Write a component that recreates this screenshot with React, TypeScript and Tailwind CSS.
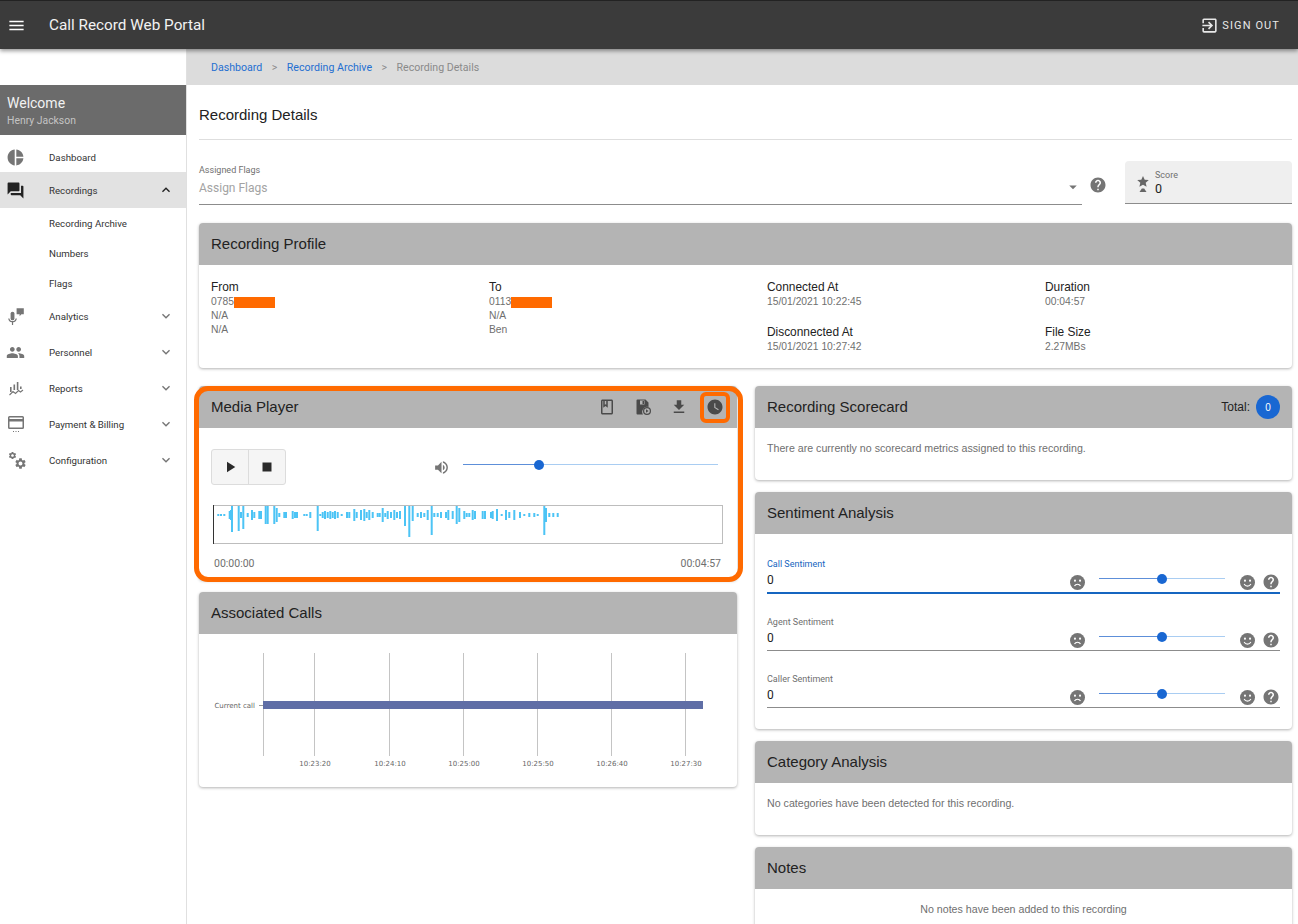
import type { ReactNode } from "react";
import {
  MdMenu,
  MdPieChart,
  MdForum,
  MdExpandLess,
  MdExpandMore,
  MdPeople,
  MdSettings,
  MdExitToApp,
  MdHelp,
  MdArrowDropDown,
  MdOutlineBook,
  MdFileDownload,
  MdWatchLater,
  MdPlayArrow,
  MdStop,
  MdVolumeUp,
} from "react-icons/md";

// x, up, down (pixels from the waveform box)
const wave: [number, number, number][] = [
  [4.3, 1, 1], [7, 1, 1], [10.3, 1, 1], [15.7, 4, 4], [17, 5, 5], [18, 9, 17], [24.7, 9, 16], [27, 3, 3], [29.3, 9, 14],
  [33.7, 2, 2], [38, 5, 5], [40.3, 3, 3], [45.3, 4, 4], [47, 4, 4], [51.7, 9, 9], [53.7, 9, 9], [60.3, 9, 9], [62.7, 7, 7],
  [65.3, 2, 2], [70.3, 3, 3], [72, 3, 3], [78.7, 4, 4], [81, 3, 3], [83, 3, 3], [90.3, 1, 1], [92.7, 1, 1], [96.3, 3, 3],
  [103.7, 9, 16], [106.3, 1, 1], [108.7, 3, 3], [111, 4, 4], [113.7, 3, 3], [116.3, 4, 4], [118.7, 3, 3], [121, 4, 4], [123.7, 3, 3],
  [127.7, 1, 1], [133, 3, 3], [135.3, 3, 3], [140.3, 6, 6], [142.7, 3, 3], [147, 5, 5], [150.3, 6, 6], [152.7, 3, 3], [155.3, 5, 5],
  [158.7, 3, 3], [163.7, 2, 2], [165.7, 2, 2], [168.7, 7, 7], [171.3, 2, 2], [173.7, 4, 4], [177, 3, 3], [180.3, 5, 5], [183, 3, 3], [186, 4, 4],
  [191, 9, 11], [195.3, 9, 22], [198.7, 9, 6], [203.7, 2, 2], [207, 3, 3], [210.3, 2, 2], [213.7, 5, 5],
  [217.7, 9, 20], [220.3, 2, 2], [223.7, 2, 2], [227, 3, 3], [232, 3, 3], [234.3, 5, 5], [238.7, 4, 4], [242.7, 9, 9], [245.3, 7, 7],
  [250.3, 4, 4], [252.7, 2, 2], [255.3, 2, 2], [258.7, 5, 5], [261, 4, 4], [268.7, 4, 4], [271, 4, 4], [277, 3, 3], [278.7, 4, 4], [283, 6, 6],
  [287.7, 1, 1], [292, 5, 5], [295.3, 3, 3], [300.3, 5, 5], [306, 3, 3], [310.3, 1, 1], [315.3, 2, 2], [320.3, 2, 2], [323.7, 1, 1],
  [330.3, 9, 20], [332, 7, 7], [335.3, 2, 2], [339.3, 2, 2], [343.7, 2, 2],
];

const chartTicks = [
  { x: 314, label: "10:23:20" },
  { x: 389, label: "10:24:10" },
  { x: 463, label: "10:25:00" },
  { x: 537, label: "10:25:50" },
  { x: 611, label: "10:26:40" },
  { x: 685, label: "10:27:30" },
];

function Face({ happy }: { happy?: boolean }) {
  return (
    <svg viewBox="0 0 16 16" className="size-[15px] shrink-0">
      <circle cx="8" cy="8" r="8" fill="#757575" />
      <circle cx="5.3" cy="6" r="1.1" fill="#fff" />
      <circle cx="10.7" cy="6" r="1.1" fill="#fff" />
      <path
        d={happy ? "M4.4 9.6c.8 1.6 2 2.3 3.6 2.3s2.8-.7 3.6-2.3" : "M4.8 11.8c.7-1.4 1.8-2 3.2-2s2.5.6 3.2 2"}
        fill="none"
        stroke="#fff"
        strokeWidth="1.2"
      />
    </svg>
  );
}

function Slider({ track, left, thumb }: { track: string; left: string; thumb: string }) {
  return (
    <div className={`relative h-[9px] ${track}`}>
      <div className="absolute top-[4px] h-[1.5px] w-full bg-[#a9cdf2]" />
      <div className={`absolute top-[4px] left-0 h-[1.5px] bg-[#5d8fd9] ${left}`} />
      <div className={`absolute top-0 size-[10px] -translate-x-1/2 rounded-full bg-[#1967d2] ${thumb}`} />
    </div>
  );
}

function NavRow({
  icon,
  label,
  open,
  active,
}: {
  icon: ReactNode;
  label: string;
  open?: boolean;
  active?: boolean;
}) {
  return (
    <div className={`flex h-[36px] items-center pr-[12px] ${active ? "bg-[#e2e2e2]" : ""}`}>
      <div className="flex w-[49px] justify-start pl-[6px] text-[#757575]">{icon}</div>
      <span className="flex-1 pt-[2px] text-[9.7px] text-[#333]">{label}</span>
      {open ? (
        <MdExpandLess className="size-[16px] text-[#222]" />
      ) : (
        <MdExpandMore className="size-[16px] text-[#757575]" />
      )}
    </div>
  );
}

function Card({
  title,
  right,
  children,
  className,
}: {
  title: string;
  right?: ReactNode;
  children: ReactNode;
  className?: string;
}) {
  return (
    <section className={`rounded-[4px] bg-white shadow-[0_1px_3px_rgba(0,0,0,0.3)] ${className ?? ""}`}>
      <header className="flex h-[42px] items-center justify-between rounded-t-[4px] bg-[#b4b4b4] px-[12px]">
        <h2 className="font-['Liberation_Sans',sans-serif] text-[15px] text-[#222]">{title}</h2>
        {right}
      </header>
      {children}
    </section>
  );
}

function Info({ label, lines }: { label: string; lines: ReactNode[] }) {
  return (
    <div>
      <div className="text-[11.9px] leading-[15px] text-[#222]">{label}</div>
      {lines.map((line, i) => (
        <div key={i} className="text-[10.3px] leading-[14px] text-[#6f6f6f]">
          {line}
        </div>
      ))}
    </div>
  );
}

function SentimentRow({ label, focused }: { label: string; focused?: boolean }) {
  return (
    <div
      className={`flex h-[43px] items-end justify-between ${
        focused ? "border-b-2 border-[#1565c0]" : "border-b border-[#8c8c8c]"
      }`}
    >
      <div className="pb-[5px] font-['Roboto',sans-serif]">
        <div className={`text-[9px] leading-[11px] ${focused ? "text-[#1565c0]" : "text-[#6f6f6f]"}`}>{label}</div>
        <div className="mt-[3px] text-[12px] leading-[14px] text-[#222]">0</div>
      </div>
      <div className="flex items-center pb-[1px]">
        <Face />
        <div className="mr-[15px] ml-[14px] -translate-y-[4px]">
          <Slider track="w-[126px]" left="w-[63px]" thumb="left-1/2" />
        </div>
        <Face happy />
        <MdHelp className="ml-[7px] size-[18px] text-[#757575]" />
      </div>
    </div>
  );
}

export default function App() {
  return (
    <div className="flex h-[924px] w-[1298px] flex-col overflow-hidden bg-white font-['Roboto',sans-serif]">
      <header className="relative z-10 flex h-[49px] shrink-0 items-center justify-between border-t border-[#222] bg-[#3b3b3b] pr-[18px] pl-[7px] shadow-[0_2px_4px_rgba(0,0,0,0.4)]">
        <div className="flex items-center">
          <MdMenu className="size-[19px] text-white" />
          <span className="ml-[23px] text-[15.3px] text-[#f2f2f2]">Call Record Web Portal</span>
        </div>
        <div className="flex items-center text-[#e8e8e8]">
          <MdExitToApp className="size-[19px]" />
          <span className="ml-[3px] pt-[2px] text-[11px] tracking-[1.1px]">SIGN OUT</span>
        </div>
      </header>

      <div className="flex flex-1 overflow-hidden">
        <aside className="w-[187px] shrink-0 border-r border-[#e0e0e0] bg-white">
          <div className="mt-[36px] flex h-[50px] flex-col justify-center bg-[#6b6b6b] px-[7px] pt-[2px]">
            <div className="text-[14px] leading-[17px] text-[#f2f2f2]">Welcome</div>
            <div className="mt-[2px] text-[10.4px] leading-[13px] text-[#c4c4c4]">Henry Jackson</div>
          </div>
          <div className="mt-[7px] flex h-[30px] items-center">
            <div className="w-[49px] pl-[6px] text-[#757575]">
              <MdPieChart className="size-[19px]" />
            </div>
            <span className="pt-[2px] text-[9.7px] text-[#333]">Dashboard</span>
          </div>
          <NavRow icon={<MdForum className="size-[19px] text-[#222]" />} label="Recordings" open active />
          {["Recording Archive", "Numbers", "Flags"].map((item) => (
            <div key={item} className="flex h-[30px] items-center pt-[2px] pl-[49px] text-[9.7px] text-[#333]">
              {item}
            </div>
          ))}
          <NavRow
            label="Analytics"
            icon={
              <svg viewBox="2 1 15 15" className="ml-[1px] size-[18px]" fill="currentColor">
                <path d="M5 6.500a1.600 1.600 0 0 1 3.200 0v4a1.600 1.600 0 0 1-3.200 0z" />
                <path d="M3 10.500h1c.2 1.400 1.200 2.200 2.600 2.200s2.400-.8 2.600-2.200h1c-.2 1.800-1.400 3-3.100 3.200V16H6.100v-2.300C4.400 13.500 3.200 12.300 3 10.500z" />
                <path d="M10 2h6v5h-2l-1.500 1.700V7H10z" />
              </svg>
            }
          />
          <NavRow label="Personnel" icon={<MdPeople className="size-[19px]" />} />
          <NavRow
            label="Reports"
            icon={
              <svg viewBox="0 0 18 18" className="ml-[1px] size-[18px]" fill="currentColor">
                <path d="M3 8h1.600v5H3zM6.500 5.500h1.600V11H6.500zM9.800 3h1.600v8H9.800zM13 7.500h1.600V10H13z" />
                <path d="M2.500 16l3.500-3.500 2.500 2 3-3 2 1.500 2.500-2" fill="none" stroke="currentColor" strokeWidth="1.100" />
              </svg>
            }
          />
          <NavRow
            label="Payment & Billing"
            icon={
              <svg viewBox="0 0 18 18" className="ml-[1px] size-[18px]" fill="currentColor">
                <path d="M2.500 1h13A1.500 1.500 0 0 1 17 2.500v10a1.500 1.500 0 0 1-1.500 1.500h-13A1.500 1.500 0 0 1 1 12.500v-10A1.500 1.500 0 0 1 2.500 1zm0 1.500V4h13V2.500zm0 4v6h13v-6z" />
                <path d="M6 16h1v1H6zM8.500 16h1v1h-1zM11 16h1v1h-1z" />
              </svg>
            }
          />
          <NavRow
            label="Configuration"
            icon={
              <div className="relative ml-[2px] size-[18px]">
                <MdSettings className="absolute top-0 left-0 size-[9px]" />
                <MdSettings className="absolute right-[-1px] bottom-[-1px] size-[13px]" />
              </div>
            }
          />
        </aside>

        <main className="flex min-w-0 flex-1 flex-col">
          <nav className="flex h-[36px] shrink-0 items-center gap-[9.5px] bg-[#dcdcdc] pt-[2px] pl-[24px] text-[10.6px]">
            <span className="text-[#1f6fd1]">Dashboard</span>
            <span className="text-[#8a8a8a]">&gt;</span>
            <span className="text-[#1f6fd1]">Recording Archive</span>
            <span className="text-[#8a8a8a]">&gt;</span>
            <span className="text-[#8a8a8a]">Recording Details</span>
          </nav>

          <div className="flex-1 pr-[6px] pl-[12px]">
            <div className="flex h-[55px] items-center border-b border-[#dedede] pt-[7px]">
              <h1 className="font-['Liberation_Sans',sans-serif] text-[15px] text-[#222]">Recording Details</h1>
            </div>

            <div className="mt-[21px] flex items-start">
              <div className="mt-[4px] flex h-[40px] w-[883px] items-end justify-between border-b border-[#8c8c8c] pb-[9px]">
                <div>
                  <div className="text-[9px] leading-[11px] text-[#6f6f6f]">Assigned Flags</div>
                  <div className="mt-[5px] text-[12px] leading-[14px] text-[#a3a3a3]">Assign Flags</div>
                </div>
                <MdArrowDropDown className="mb-[-1px] size-[18px] text-[#757575]" />
              </div>
              <MdHelp className="mt-[15px] ml-[7px] size-[18px] text-[#757575]" />
              <div className="ml-[18px] flex h-[43px] w-[167px] items-center rounded-t-[4px] border-b border-[#8c8c8c] bg-[#efefef] pl-[12px]">
                <svg viewBox="0 0 12 16" className="mt-[3px] h-[16px] w-[12px] text-[#666]" fill="currentColor">
                  <path d="M6 0l1.700 3.700 4.100.4-3.100 2.700.9 4L6 8.700l-3.600 2.100.9-4L.2 4.100l4.100-.4z" />
                  <path d="M2.500 16l2.300-3.500h2.400L9.500 16z" />
                </svg>
                <div className="ml-[6px] pt-[2px]">
                  <div className="text-[9px] leading-[11px] text-[#6f6f6f]">Score</div>
                  <div className="text-[12.5px] leading-[15px] text-[#222]">0</div>
                </div>
              </div>
            </div>

            <Card title="Recording Profile" className="mt-[18px] h-[145px]">
              <div className="grid grid-cols-[repeat(4,278px)] px-[12px] pt-[15px] font-['Liberation_Sans',sans-serif]">
                <Info
                  label="From"
                  lines={[
                    <span key="a" className="flex items-center">
                      0785<span className="h-[11px] w-[41px] bg-[#ff6a00]" />
                    </span>,
                    "N/A",
                    "N/A",
                  ]}
                />
                <Info
                  label="To"
                  lines={[
                    <span key="a" className="flex items-center">
                      0113<span className="h-[11px] w-[41px] bg-[#ff6a00]" />
                    </span>,
                    "N/A",
                    "Ben",
                  ]}
                />
                <div className="flex flex-col gap-[16px]">
                  <Info label="Connected At" lines={["15/01/2021 10:22:45"]} />
                  <Info label="Disconnected At" lines={["15/01/2021 10:27:42"]} />
                </div>
                <div className="flex flex-col gap-[16px]">
                  <Info label="Duration" lines={["00:04:57"]} />
                  <Info label="File Size" lines={["2.27MBs"]} />
                </div>
              </div>
            </Card>

            <div className="mt-[18px] flex gap-[18px]">
              <div className="flex w-[538px] shrink-0 flex-col gap-[12px]">
                <div className="relative">
                  <Card
                    title="Media Player"
                    right={
                      <div className="flex items-center gap-[18px] pr-[1px] text-[#4a4a4a]">
                        <MdOutlineBook className="size-[18px]" />
                        <svg viewBox="0 0 18 18" className="size-[18px]" fill="currentColor">
                          <path d="M3.500 1.500h8l3 3V9a5 5 0 0 0-5.500 7.500H3.500A1 1 0 0 1 2.500 15.500v-13a1 1 0 0 1 1-1z" />
                          <path fill="#b4b4b4" d="M6 2.500h4.500v4H6z" />
                          <path d="M8.500 3h1.500v3H8.500z" />
                          <circle cx="13" cy="13" r="3.400" fill="none" stroke="currentColor" strokeWidth="1.200" />
                          <path d="M12 11.300v3.400l2.500-1.700z" />
                        </svg>
                        <MdFileDownload className="size-[18px]" />
                        <MdWatchLater className="size-[18px]" />
                      </div>
                    }
                    className="h-[194px]"
                  >
                    <div className="px-[12px] pt-[21px]">
                      <div className="flex items-center">
                        <div className="flex h-[36px] w-[75px] rounded-[3px] border border-[#dcdcdc] bg-[#f5f5f5] text-[#2a2a2a]">
                          <div className="flex flex-1 items-center justify-center border-r border-[#dcdcdc]">
                            <MdPlayArrow className="size-[18px]" />
                          </div>
                          <div className="flex flex-1 items-center justify-center">
                            <MdStop className="size-[18px]" />
                          </div>
                        </div>
                        <MdVolumeUp className="ml-[147px] size-[17px] text-[#757575]" />
                        <div className="ml-[13px] -translate-y-[3px]">
                          <Slider track="w-[255px]" left="w-[76px]" thumb="left-[29.800%]" />
                        </div>
                      </div>
                      <svg viewBox="0 0 510 39" className="mt-[20px] ml-[2px] block h-[39px] w-[510px]">
                        <rect x="0.500" y="0.500" width="509" height="38" fill="#fff" stroke="#bdbdbd" />
                        {wave.map(([x, up, down]) => (
                          <rect key={x} x={x} y={10 - up} width="2" height={up + down} fill="#4cc4f5" />
                        ))}
                        <rect x="0" y="0" width="1" height="39" fill="#333" />
                      </svg>
                      <div className="mt-[12px] flex justify-between pr-[4px] pl-[3px] text-[10.5px] text-[#6f6f6f]">
                        <span>00:00:00</span>
                        <span>00:04:57</span>
                      </div>
                    </div>
                  </Card>
                  {/* annotations drawn over the screenshot */}
                  <div className="pointer-events-none absolute top-0 -right-[6px] -left-[5px] h-[196px] rounded-[14px] border-[5px] border-[#ff6a00]" />
                  <div className="pointer-events-none absolute top-[6px] right-[7px] h-[31px] w-[30px] rounded-[6px] border-[4px] border-[#ff6a00]" />
                </div>

                <Card title="Associated Calls" className="h-[195px]">
                  <svg viewBox="199 634 538 153" className="block h-[153px] w-[538px]">
                    <line x1="263.500" y1="653" x2="263.500" y2="756" stroke="#c4c4c4" />
                    {chartTicks.map((t) => (
                      <g key={t.x}>
                        <line x1={t.x + 0.5} y1="653" x2={t.x + 0.5} y2="756" stroke="#c4c4c4" />
                        <text
                          x={t.x + 1}
                          y="766"
                          textAnchor="middle"
                          fontSize="7"
                          fontFamily="'DejaVu Sans', sans-serif"
                          fill="#666"
                        >
                          {t.label}
                        </text>
                      </g>
                    ))}
                    <rect x="263" y="701" width="440" height="8" fill="#5f6ea6" />
                    <line x1="259" y1="705.500" x2="263" y2="705.500" stroke="#999" />
                    <text x="255" y="708" textAnchor="end" fontSize="7" fontFamily="'DejaVu Sans', sans-serif" fill="#666">
                      Current call
                    </text>
                  </svg>
                </Card>
              </div>

              <div className="flex w-[537px] shrink-0 flex-col gap-[12px]">
                <Card
                  title="Recording Scorecard"
                  right={
                    <div className="flex items-center gap-[6px] font-['Liberation_Sans',sans-serif] text-[12px] text-[#222]">
                      Total:
                      <span className="flex size-[24px] items-center justify-center rounded-full bg-[#1967d2] text-[10px] text-white">
                        0
                      </span>
                    </div>
                  }
                  className="h-[94px]"
                >
                  <p className="px-[12px] pt-[13px] font-['Liberation_Sans',sans-serif] text-[10.65px] text-[#6f6f6f]">
                    There are currently no scorecard metrics assigned to this recording.
                  </p>
                </Card>
                <Card title="Sentiment Analysis" className="h-[237px]">
                  <div className="flex flex-col gap-[14px] px-[12px] pt-[17px]">
                    <SentimentRow label="Call Sentiment" focused />
                    <SentimentRow label="Agent Sentiment" />
                    <SentimentRow label="Caller Sentiment" />
                  </div>
                </Card>
                <Card title="Category Analysis" className="h-[94px]">
                  <p className="px-[12px] pt-[13px] font-['Liberation_Sans',sans-serif] text-[10.65px] text-[#6f6f6f]">
                    No categories have been detected for this recording.
                  </p>
                </Card>
                <Card title="Notes" className="h-[90px]">
                  <p className="pt-[13px] text-center font-['Liberation_Sans',sans-serif] text-[10.65px] text-[#6f6f6f]">
                    No notes have been added to this recording
                  </p>
                </Card>
              </div>
            </div>
          </div>
        </main>
      </div>
    </div>
  );
}
